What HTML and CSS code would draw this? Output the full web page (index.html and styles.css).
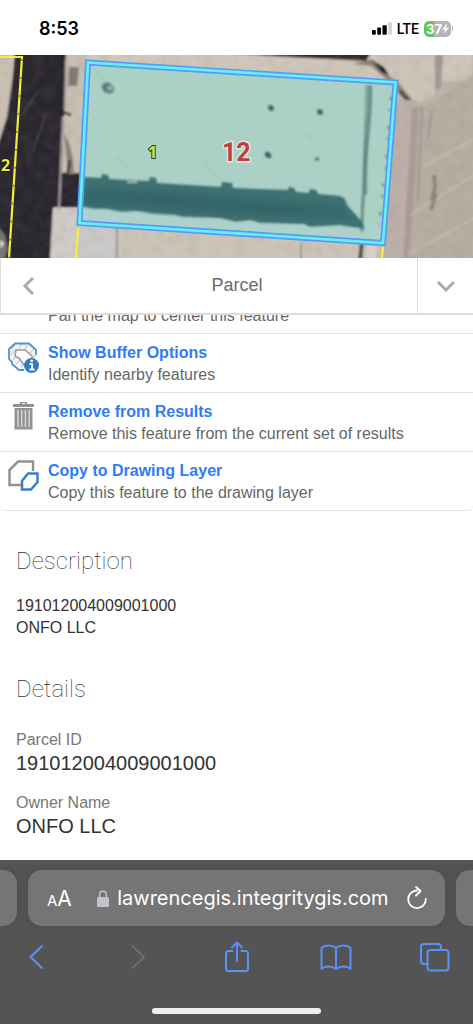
FILE: index.html
```html
<!DOCTYPE html>
<html lang="en">
<head>
<meta charset="utf-8">
<meta name="viewport" content="width=device-width, initial-scale=1">
<title>Parcel</title>
<link rel="stylesheet" href="styles.css">
</head>
<body>
<div class="screen">
  <header class="status">
    <span class="time">8:53</span>
    <div class="indicators">
      <svg class="signal" viewBox="0 0 21 13" aria-hidden="true">
        <rect x="0" y="8" width="4" height="5" rx="1"/><rect x="5.500" y="5.500" width="4" height="7.500" rx="1"/><rect x="11" y="3" width="4.500" height="10" rx="1"/><rect x="17" y="0" width="4" height="13" rx="1" fill="#d5d5d5"/>
      </svg>
      <span class="network">LTE</span>
      <span class="battery-group"><span class="battery"><span class="charge">37</span><svg class="bolt" viewBox="0 0 8 12" aria-hidden="true"><path d="M6 0 0 7h3.500L2 12l6-7H4.500z" fill="#fff"/></svg></span><span class="nub"></span></span>
    </div>
  </header>

  <svg class="map" viewBox="0 0 473 203" preserveAspectRatio="xMidYMid slice" role="img" aria-label="Aerial parcel map">
    <defs>
      <filter id="soft" x="-5%" y="-5%" width="110%" height="110%"><feGaussianBlur stdDeviation="0.9"/></filter>
      <filter id="wide" x="-20%" y="-20%" width="140%" height="140%"><feGaussianBlur stdDeviation="3"/></filter>
      <filter id="grain" x="0" y="0" width="100%" height="100%"><feTurbulence type="fractalNoise" baseFrequency="0.09" numOctaves="3" seed="4"/><feColorMatrix values="0 0 0 0 0.25  0 0 0 0 0.22  0 0 0 0 0.2  0.9 0 0 0 -0.33"/></filter>
      <linearGradient id="ground" x1="0" x2="1" y1="0" y2="0"><stop offset="0" stop-color="#cbc3b8"/><stop offset=".8" stop-color="#c9c1b7"/><stop offset="1" stop-color="#b6afa4"/></linearGradient>
    </defs>
    <rect width="473" height="203" fill="url(#ground)"/>
    <g filter="url(#soft)">
      <path d="M-2 3H13L10 50 0 100H-2z" fill="#c9bfb3"/>
      <path d="M15-2H66L62 118H82V152H53L50 206H-2V90L7 62 13 20z" fill="#2a282e"/>
      <path d="M-2 172 5 180 8 194 4 206H-2z" fill="#77756f"/>
      <path d="M0 185 4 188 1 194z" fill="#eee"/>
      <path d="M66 0H86L79 118H70L66 95 65 60z" fill="#c8c0b2"/>
      <path d="M69 12H79L77 31H68z" fill="#817972"/>
      <path d="M64 78 70 90 73 105 74 119H68L66 98z" fill="#8a827b"/>
      <path d="M63 57 71 60M70 105 68 118" stroke="#38343a" stroke-width="2.500"/>
      <path d="M53 154H78L76 206H50z" fill="#cfcbc6"/>
      <path d="M77 169 116 172 114 206H76z" fill="#cbcaca"/>
      <path d="M117 172 373 190 370 206H115z" fill="#cdc5b9"/>
      <path d="M86-2H473V26H398L88 6z" fill="#d0c7bb"/>
      <path d="M230-2H371L366 6 270 1z" fill="#302a2b"/>
      <path d="M372-2H435V49H412L391 25z" fill="#cdc5ba"/>
      <path d="M353 9 372 4 387 19 400 30 416 49 408 49 386 24 371 11z" fill="#8a8177"/>
      <path d="M372 5 384 12 389 20 381 17z" fill="#292825"/>
      <path d="M400 36 412 49" stroke="#4c463f" stroke-width="3"/>
      <path d="M393 45H419L408 206H383z" fill="#bdb0a8"/>
      <path d="M412 52H419L411 206H403z" fill="#ad9b95"/>
      <path d="M420 48 474 18V206H409z" fill="#b5aea3"/>
      <path d="M435 0H443L441 33 435 35z" fill="#a59894"/>
      <path d="M422 50 474 20M422 112 474 84M410 160 474 120M408 200 474 163" stroke="#c5bdb1" stroke-width="2"/>
      <path d="M422 52 418 145M432 55 428 85" stroke="#a0988f" stroke-width="2"/>
      <path d="M117 172V206M301 188V206" stroke="#8b857d" stroke-width="1.500"/>
      <path d="M362 186 360 206" stroke="#4e4842" stroke-width="4"/>
      <path d="M368 190H377L375 206H366z" fill="#d7d2ca"/>
      <path d="M434 120 435 132 432 145M436 139 431 155" fill="none" stroke="#726a63" stroke-width="4" opacity=".6"/>
      <path d="M46 58 32 98M39 35 22 60" stroke="#55525a" stroke-width="1"/>
      <path d="M66 5 65 55M63 62 59 155" stroke="#aaa5a4" stroke-width="2"/>
    </g>
    <rect width="473" height="203" filter="url(#grain)" opacity=".3"/>
    <path d="M88 7 395 27 383 188 79 169z" fill="#abd0c5"/>
    <g filter="url(#soft)">
      <path d="M82 153 158 158 230 166 340 174 360 174 369 167 383 177 382 187 81 168z" fill="#add1cb"/>
      <path d="M367 30 362 178" stroke="#7da79b" stroke-width="3"/>
      <path d="M370 31C371 65 364 90 365 140" fill="none" stroke="#42736f" stroke-width="4" stroke-dasharray="2 1"/>
      <path d="M363 140 361 175" stroke="#578a82" stroke-width="2"/>
      <path d="M391 42 386 108 379 170" fill="none" stroke="#4c817b" stroke-width="2" stroke-dasharray="3 9 2 15"/>
      <path d="M84 122 101 123 102 119 108 120 109 124 149 126 150 122 156 123 157 128 221 132 222 127 232 128 233 133 288 135 289 132 294 133 296 137 309 138 310 134 316 135 318 139 340 141 345 144 347 150 363 168 365 174 340 170 310 172 304 169 260 168 250 165 236 167 220 163 182 162 174 160 154 159 136 156 121 157 107 154 93 154 80 151z" fill="#3e7172"/>
      <path d="M86 133 180 137 275 146 338 152 352 163 250 161 83 148z" fill="#326166" opacity=".65" filter="url(#wide)"/>
      <path d="M127 127H137" stroke="#9abfb1" stroke-width="2"/>
      <ellipse cx="108" cy="33" rx="6.500" ry="5" transform="rotate(30 108 33)" fill="#4f8075"/>
      <ellipse cx="110" cy="33" rx="3" ry="2.500" fill="#86b3a7"/>
      <g fill="#31655f"><ellipse cx="271" cy="53" rx="3" ry="2.500" transform="rotate(40 271 53)"/><ellipse cx="320" cy="57" rx="3" ry="2.500" transform="rotate(40 320 57)"/><ellipse cx="268" cy="100" rx="3.500" ry="2.500" transform="rotate(40 268 100)"/><ellipse cx="317" cy="104" rx="2.500" ry="2" fill="#568a81"/></g>
      <path d="M94 14 106 25M117 102 126 112M203 106 220 124M305 78 313 86" stroke="#92bab0" stroke-width="1"/>
    </g>
    <path d="M88 7.500 395.500 27.500 383 188 79.500 168z" fill="none" stroke="#549cf4" stroke-width="6"/>
    <path d="M88 7.500 395.500 27.500 383 188 79.500 168z" fill="none" stroke="#67eefc" stroke-width="2.600"/>
    <path d="M0 2H22L9 203M78 173 76 203M383 192 382 203" fill="none" stroke="#f5ef38" stroke-width="2.200"/>
    <path d="M22 4 9 203" fill="none" stroke="#8f8b35" stroke-width="2.200" stroke-dasharray="2 16"/>
    <g class="map-labels">
      <text x="1" y="116" class="lot">2</text>
      <text x="148" y="103" class="lot lot-green">1</text>
      <text x="222" y="106" class="block">12</text>
    </g>
  </svg>

  <nav class="titlebar">
    <button class="nav-button" aria-label="Back"><svg viewBox="0 0 20 20"><path d="M14 2 6 10l8 8" fill="none" stroke="#aaa" stroke-width="3"/></svg></button>
    <h1>Parcel</h1>
    <button class="nav-button collapse" aria-label="Collapse"><svg viewBox="0 0 20 20"><path d="M2 6l8 8 8-8" fill="none" stroke="#aaa" stroke-width="3"/></svg></button>
  </nav>

  <main class="content">
    <ul class="actions">
      <li class="action partial">
        <p>Pan the map to center this feature</p>
      </li>
      <li class="action">
        <svg class="action-icon" viewBox="0 0 32 32" aria-hidden="true">
          <path d="M6.500 1.500H20l7 7V19l-7 9h-5L3 18 1 13V6z" fill="#f3f3f3"/>
          <path d="M3 7 7 3M3 13 7 8M5 18 8 14M8 22l4-4M13 25l4-5M11 6l3-4M17 7l3-4M22 11l4-4M24 17l3-4" stroke="#bbb" stroke-width="1"/>
          <path d="M28 13V8L21 1.500H7L1 7v10l3 3v2l7 6h5" fill="none" stroke="#5194cc" stroke-width="1.800"/>
          <path d="M8 8H17l7 6v9h-8l-5-7-4-2z" fill="#fff" stroke="#999" stroke-width="1.500"/>
          <circle cx="23.500" cy="23.500" r="7.500" fill="#337ac1"/><path d="M21.500 21.800h2.500v5.700m-2.500 0h5" fill="none" stroke="#fff" stroke-width="1.800"/><circle cx="23.700" cy="18.800" r="1.400" fill="#fff"/>
        </svg>
        <div><a href="#buffer">Show Buffer Options</a><p>Identify nearby features</p></div>
      </li>
      <li class="action">
        <svg class="action-icon" viewBox="0 0 32 32" aria-hidden="true">
          <path d="M12 3V1h7v2h7v3H5V3z" fill="#929292"/><path d="M14 2h3v1h-3z" fill="#fff"/>
          <path d="M6.500 7h18v21.500h-18z" fill="#929292"/><path d="M10 9v17M13.700 9v17M17.400 9v17M21.100 9v17" stroke="#ddd" stroke-width="1.300"/>
        </svg>
        <div><a href="#remove">Remove from Results</a><p>Remove this feature from the current set of results</p></div>
      </li>
      <li class="action">
        <svg class="action-icon" viewBox="0 0 32 32" aria-hidden="true">
          <path d="M13 25H1.500V10L10 1.500h15V11" fill="none" stroke="#929292" stroke-width="2.500"/>
          <path d="M20 13.500h9.500V22L23 29.500h-9V21z" fill="#fff" stroke="#3c80c4" stroke-width="2.500"/>
        </svg>
        <div><a href="#copy">Copy to Drawing Layer</a><p>Copy this feature to the drawing layer</p></div>
      </li>
    </ul>

    <section class="section">
      <h2>Description</h2>
      <p class="description">191012004009001000<br>ONFO LLC</p>
    </section>
    <section class="section">
      <h2>Details</h2>
      <dl class="details">
        <div><dt>Parcel ID</dt><dd>191012004009001000</dd></div>
        <div><dt>Owner Name</dt><dd>ONFO LLC</dd></div>
      </dl>
    </section>
  </main>

  <footer class="browser">
    <div class="tabs">
      <div class="tab tab-left"></div>
      <div class="tab address">
        <button class="text-size" aria-label="Text size"><small>A</small>A</button>
        <div class="site">
          <svg class="lock" viewBox="0 0 12 17" aria-hidden="true"><path d="M2.700 8V4.500a3.300 3.300 0 0 1 6.600 0V8" fill="none" stroke="#c4c2c8" stroke-width="1.500"/><rect y="7" width="12" height="10" rx="1.500" fill="#c4c2c8"/></svg>
          <span>lawrencegis.integritygis.com</span>
        </div>
        <button class="reload" aria-label="Reload"><svg viewBox="0 0 22 24"><path d="M11 4.500A8.800 8.800 0 1 0 19.800 13M10 1l4.500 4L10 9.500" fill="none" stroke="#fff" stroke-width="1.800" stroke-linecap="round" stroke-linejoin="round"/></svg></button>
      </div>
      <div class="tab tab-right"></div>
    </div>
    <div class="tools">
      <button aria-label="Back"><svg viewBox="0 0 32 32"><path d="M20 5 8.500 16 20 27"/></svg></button>
      <button aria-label="Forward" disabled><svg viewBox="0 0 32 32"><path d="M11.500 5 23 16 11.500 27"/></svg></button>
      <button aria-label="Share"><svg viewBox="0 0 32 32"><path d="M11.500 10H7.500a2.500 2.500 0 0 0-2.500 2.500v15a2.500 2.500 0 0 0 2.500 2.500h17a2.500 2.500 0 0 0 2.500-2.500v-15a2.500 2.500 0 0 0-2.500-2.500H20.500M16 20V2M11 6.500 16 1.500l5 5"/></svg></button>
      <button aria-label="Bookmarks"><svg viewBox="0 0 32 32"><path d="M16 28C12 24.500 5 24.500 1.500 28V7C5 3.500 12 3.500 16 7c4-3.500 11-3.500 14.500 0v21C27 24.500 20 24.500 16 28zM16 7v21"/></svg></button>
      <button aria-label="Tabs"><svg viewBox="0 0 32 32"><path d="M8.500 23H5a3 3 0 0 1-3-3V6a3 3 0 0 1 3-3h14a3 3 0 0 1 3 3v3"/><rect x="8.500" y="9" width="21" height="20.500" rx="3"/></svg></button>
    </div>
    <div class="home"></div>
  </footer>
</div>
</body>
</html>
```

FILE: styles.css
```css
* { box-sizing: border-box; }
body, h1, h2, p, ul, dl, dd { margin: 0; padding: 0; }
body { background: #fff; font-family: "Liberation Sans", Arial, sans-serif; font-size: 16px; color: #333; }
button { border: 0; padding: 0; background: none; font: inherit; color: inherit; display: flex; align-items: center; justify-content: center; }
svg { display: block; flex: none; }

.screen { display: flex; flex-direction: column; height: 100vh; overflow: hidden; }

.status { flex: none; height: 55px; display: flex; align-items: center; justify-content: space-between; padding: 2px 20px 0 39px; font-family: Inter, sans-serif; color: #000; }
.time { font-size: 18px; font-weight: 600; }
.indicators { display: flex; align-items: center; gap: 5px; }
.signal { width: 20px; height: 13px; }
.network { font-family: Roboto, sans-serif; font-size: 14px; font-weight: 500; }
.battery-group { display: flex; align-items: center; gap: 1px; }
.battery { display: flex; align-items: center; justify-content: center; width: 27px; height: 16px; border-radius: 5px; background: linear-gradient(90deg, #61c95c 38%, #b5b5b5 38%); color: #fff; }
.nub { width: 1px; height: 5px; background: #b5b5b5; }
.charge { font-size: 13px; font-weight: 700; }
.bolt { width: 7px; height: 11px; }

.map { width: 100%; height: 203px; flex: none; }
.map-labels { font-family: "Open Sans", sans-serif; font-weight: 700; paint-order: stroke; }
.lot { font-size: 16px; fill: #f0e850; stroke: #161616; stroke-width: 2px; }
.lot-green { fill: #c3eb45; stroke: #174034; }
.block { font-family: Roboto, sans-serif; font-size: 25px; fill: #c83b3d; stroke: #d4ebe4; stroke-width: 3px; }

.titlebar { flex: none; display: flex; height: 57px; border: 1px solid #ddd; border-width: 0 0 2px 1px; }
.titlebar h1 { flex: 1; align-self: center; text-align: center; font-size: 18px; font-weight: 400; color: #6b6b6b; }
.nav-button { width: 56px; }
.nav-button svg { width: 20px; height: 20px; }
.collapse { border-left: 1px solid #ddd; }

.content { flex: 1; min-height: 0; overflow: hidden; }
.actions { list-style: none; border-bottom: 1px solid #e4e4e4; border-radius: 6px; }
.action { display: flex; gap: 8px; padding: 8px; }
.action + .action { border-top: 1px solid #e4e4e4; height: 59px; padding-top: 8px; }
.partial { margin-top: -10px; padding: 0 8px 6px 48px; }
.action-icon { width: 32px; height: 32px; flex: none; }
.action a { display: block; font-weight: 700; line-height: 22px; color: #2f7cf6; text-decoration: none; }
.action p { line-height: 22px; color: #666; white-space: nowrap; }

.section { padding: 34px 16px 0; }
.section h2 { font-family: Roboto, sans-serif; font-weight: 100; font-size: 24px; line-height: 32px; color: #333; }
.description { margin-top: 18px; line-height: 22px; }
.details { display: flex; flex-direction: column; gap: 16px; margin-top: 24px; }
.details dt { line-height: 22px; color: #777; }
.details dd { font-size: 20px; line-height: 25px; }

.browser { flex: none; height: 164px; padding-top: 10px; background: #545454; display: flex; flex-direction: column; }
.tabs { display: flex; gap: 11px; height: 56px; }
.tab { background: #757575; box-shadow: 0 0 6px #4a4a4a; }
.tab-left { width: 17px; border-radius: 0 14px 14px 0; }
.tab-right { width: 17px; border-radius: 14px 0 0 14px; }
.address { flex: 1; border-radius: 14px; display: flex; align-items: center; justify-content: space-between; padding: 0 17px 0 19px; color: #fff; font-family: Inter, sans-serif; }
.text-size { font-size: 21px; align-items: baseline; }
.text-size small { font-size: 15px; }
.site { display: flex; align-items: center; gap: 8px; margin-left: 8px; font-size: 20px; }
.lock { width: 12px; height: 17px; }
.reload svg { width: 22px; height: 24px; }
.tools { display: flex; justify-content: space-between; padding: 15px 22px 0; }
.tools svg { width: 32px; height: 32px; fill: none; stroke: #5b90f5; stroke-width: 2px; stroke-linecap: round; stroke-linejoin: round; }
.tools button:disabled svg { stroke: #6d6d6d; }
.home { width: 169px; height: 6px; margin: auto auto 10px; border-radius: 3px; background: #eee; }
```
